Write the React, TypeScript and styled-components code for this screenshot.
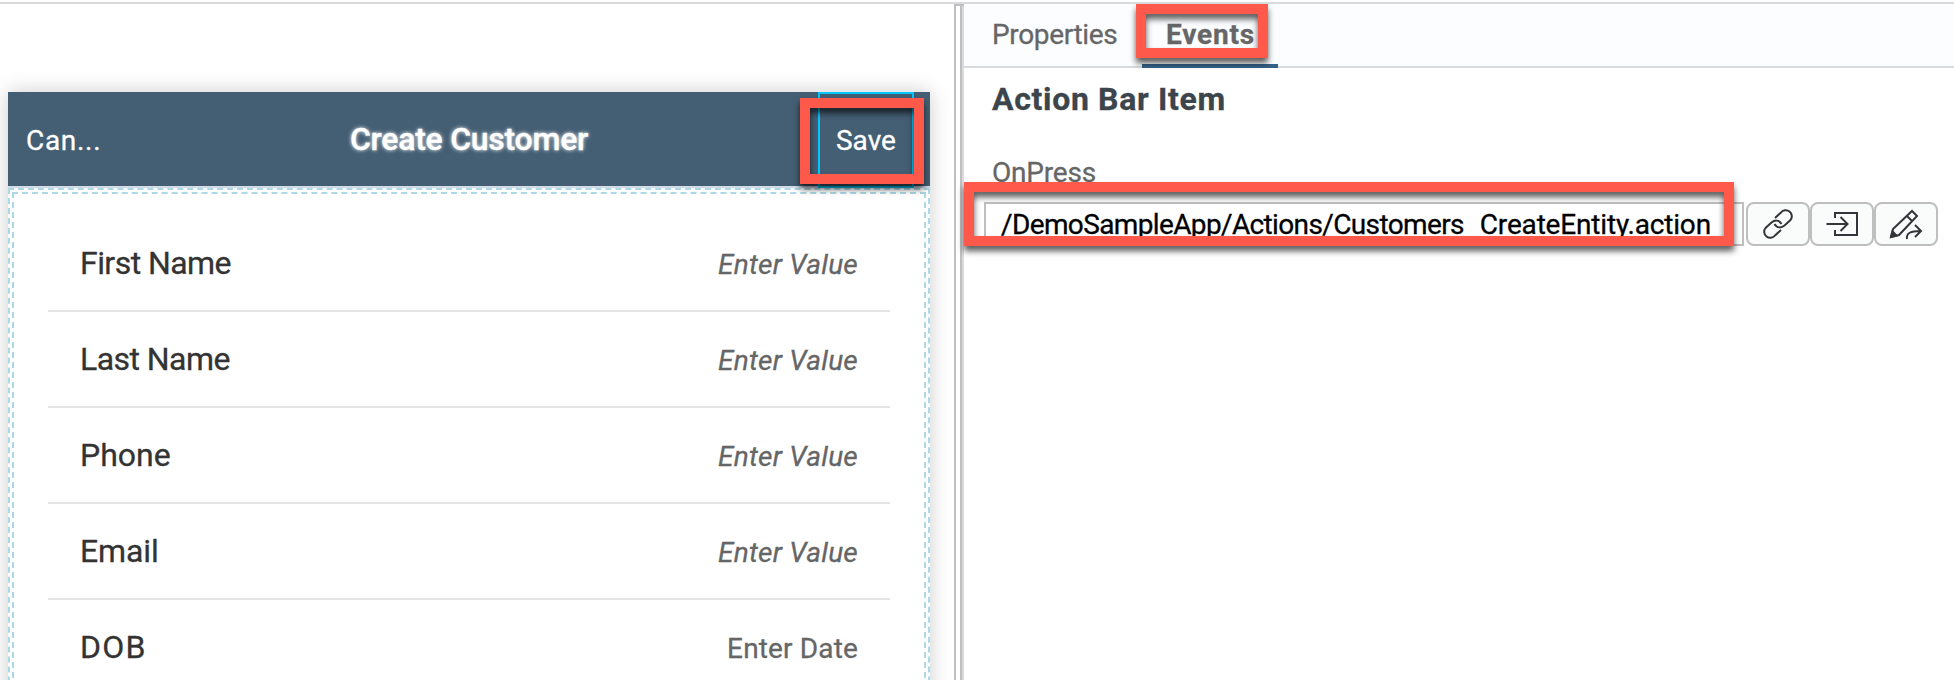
import React from 'react';
import styled, { createGlobalStyle } from 'styled-components';

const GlobalStyle = createGlobalStyle`
  * { box-sizing: border-box; }
  body { margin: 0; background: #fff; font-family: Roboto, 'Liberation Sans', sans-serif; overflow: hidden; }
`;

const Page = styled.div`
  display: flex;
  height: 680px;
  border-top: 2px solid #d9dadd;
  margin-top: 2px;
  overflow: hidden;
`;

const Canvas = styled.section`
  width: 954px;
  flex: none;
  padding: 88px 24px 0 8px;
`;

const Splitter = styled.div`
  width: 10px;
  flex: none;
  border: 2px solid #bfbfbf;
  border-right: 0;
  background: linear-gradient(to right, #fff 4px, #bfbfbf 4px, #bfbfbf 6px, #d9d9de 6px);
`;

const Phone = styled.div`
  width: 922px;
  height: 760px;
  display: flex;
  flex-direction: column;
  background: #fff;
  box-shadow: 0 0 20px rgba(0, 0, 0, 0.2);
`;

const ActionBar = styled.header`
  height: 96px;
  flex: none;
  display: flex;
  justify-content: space-between;
  background: #445e73;
  border-bottom: 2px solid #d1dce8;
  color: #fff;
`;

const Text = styled.span<{ $size?: number; $gap?: number; $weight?: number; $color?: string }>`
  font-size: ${p => p.$size ?? 28}px;
  line-height: 40px;
  letter-spacing: ${p => p.$gap ?? 0}px;
  font-weight: ${p => p.$weight ?? 400};
  color: ${p => p.$color ?? 'inherit'};
  -webkit-text-stroke: 0.3px currentColor;
  white-space: nowrap;
`;

const BarSide = styled.div`
  width: 112px;
  padding: 29px 0 0 18px;
`;

const Title = styled(Text)`
  margin-top: 27px;
  text-shadow: 0 0 4px #fff;
`;

const SaveItem = styled.div`
  position: relative;
  width: 96px;
  height: 96px;
  margin-right: 16px;
  padding: 27px 0 0 16px;
  border: 2px solid #00c8ff;
`;

const Highlight = styled.div<{ $x: number; $y: number; $w: number; $h: number }>`
  position: absolute;
  left: ${p => p.$x}px;
  top: ${p => p.$y}px;
  width: ${p => p.$w}px;
  height: ${p => p.$h}px;
  border: 10px solid #ff594b;
  filter: drop-shadow(0 5px 3px rgba(0, 0, 0, 0.65));
  pointer-events: none;
`;

const DropZone = styled.div`
  flex: 1;
  padding: 2px;
  border: 2px dashed #add8e6;
`;

const FormArea = styled.div`
  height: 100%;
  padding: 22px 34px 0;
  border: 2px dashed #add8e6;
`;

const Row = styled.div`
  height: 96px;
  display: flex;
  justify-content: space-between;
  padding: 27px 32px 0;
  border-bottom: 2px solid #e4e4e4;
`;

const Value = styled(Text)<{ $italic: boolean }>`
  font-style: ${p => (p.$italic ? 'italic' : 'normal')};
  padding-top: 2px;
`;

const Panel = styled.section`
  position: relative;
  flex: 1;
`;

const Tabs = styled.nav`
  height: 64px;
  display: flex;
  background: #fcfdfe;
  border-bottom: 2px solid #d9dadd;
`;

const Tab = styled.div<{ $active?: boolean; $indent: number }>`
  height: 64px;
  padding: 11px 0 0 ${p => p.$indent}px;
  color: #666;
  ${p => (p.$active ? 'width: 136px; border-bottom: 4px solid #346187;' : 'width: 178px;')}
`;

const Heading = styled.div`
  padding: 11px 28px 0;
  height: 85px;
`;

const FieldLabel = styled.div`
  padding: 0 28px;
  height: 49px;
`;

const Field = styled.div`
  display: flex;
  padding-left: 20px;
  height: 44px;
`;

const Input = styled.div`
  width: 760px;
  margin-right: 2px;
  padding: 1px 0 0 15px;
  border: 2px solid #bfbfbf;
  color: #000;
`;

const Underscore = styled.span`
  display: inline-block;
  width: 16px;
  line-height: 20px;
  vertical-align: -4px;
`;

const IconButton = styled.button`
  width: 64px;
  padding: 0;
  display: flex;
  border: 2px solid #bfbfbf;
  border-radius: 8px;
  background: #fafcfb;
  svg { display: block; fill: none; stroke: #32363a; stroke-width: 2; }
`;

const fields = [
  { label: 'First Name', value: 'Enter Value', gap: -0.55 },
  { label: 'Last Name', value: 'Enter Value', gap: -0.55 },
  { label: 'Phone', value: 'Enter Value', gap: 0 },
  { label: 'Email', value: 'Enter Value', gap: -0.1 },
  { label: 'DOB', value: 'Enter Date', gap: 1.3 },
];

const LinkIcon = () => (
  <svg width="60" height="40" viewBox="0 0 60 40">
    <path d="M27 14L33 8.500A6.050 6.050 0 0 1 42.500 16L36.500 21.500C33.500 24 29 24.500 26.500 20" />
    <path d="M33 26L27 31.500A6.050 6.050 0 0 1 17.500 24L23.500 18.500C26.500 16 31 15.500 33.500 20" />
  </svg>
);

const EnterIcon = () => (
  <svg width="60" height="40" viewBox="0 0 60 40">
    <path d="M23 14V9H45V31H23V26M14.500 20H35M28.500 13L35.500 20L28.500 27" />
  </svg>
);

const EditIcon = () => (
  <svg width="60" height="40" viewBox="0 0 60 40">
    <path d="M15 33L17 25L36 7L41 12L23 31L15 33M31 12L36 17" />
    <path d="M15 33L16.500 27.500L20.500 31.500Z" fill="#32363a" />
    <path d="M31 35C30 29 35 27 44 27M39 21L45 27L39 33" />
  </svg>
);

export default function App() {
  return (
    <>
      <GlobalStyle />
      <Page>
        <Canvas>
          <Phone>
            <ActionBar>
              <BarSide><Text $gap={0.7}>Can...</Text></BarSide>
              <Title $size={32} $weight={500} $gap={-0.25}>Create Customer</Title>
              <SaveItem>
                <Text>Save</Text>
                <Highlight $x={-20} $y={4} $w={124} $h={86} />
              </SaveItem>
            </ActionBar>
            <DropZone>
              <FormArea>
                {fields.map(f => {
                  const italic = f.value === 'Enter Value';
                  return (
                    <Row key={f.label}>
                      <Text $size={32} $gap={f.gap} $color="#333">{f.label}</Text>
                      <Value $italic={italic} $gap={italic ? 0.25 : 0.15} $color="#666">{f.value}</Value>
                    </Row>
                  );
                })}
              </FormArea>
            </DropZone>
          </Phone>
        </Canvas>
        <Splitter />
        <Panel>
          <Tabs>
            <Tab $indent={28}><Text $gap={-0.35}>Properties</Text></Tab>
            <Tab $active $indent={24}><Text $weight={700} $gap={0.8}>Events</Text></Tab>
          </Tabs>
          <Heading><Text $size={32} $weight={700} $gap={0.67} $color="#3c454c">Action Bar Item</Text></Heading>
          <FieldLabel><Text $gap={-0.2} $color="#666">OnPress</Text></FieldLabel>
          <Field>
            <Input>
              <Text $gap={-0.63}>/DemoSampleApp/Actions/Customers<Underscore>_</Underscore></Text>
              <Text $gap={-0.18}>CreateEntity.action</Text>
            </Input>
            <IconButton aria-label="Link"><LinkIcon /></IconButton>
            <IconButton aria-label="Open"><EnterIcon /></IconButton>
            <IconButton aria-label="Edit"><EditIcon /></IconButton>
          </Field>
          <Highlight $x={172} $y={0} $w={132} $h={54} />
          <Highlight $x={0} $y={178} $w={770} $h={64} />
        </Panel>
      </Page>
    </>
  );
}
